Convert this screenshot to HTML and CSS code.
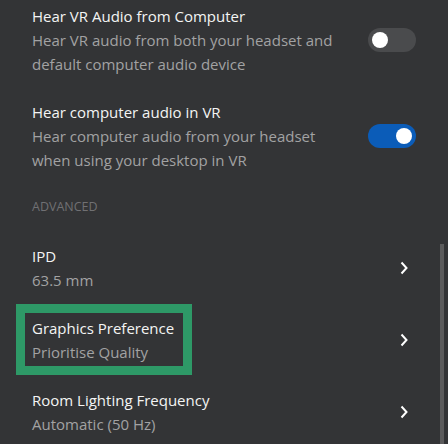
FILE: index.html
```html
<!DOCTYPE html>
<html>
<head>
<meta charset="utf-8">
<link rel="stylesheet" href="styles.css">
</head>
<body>
<div class="page">
  <div class="row">
    <div class="text">
      <div class="title">Hear VR Audio from Computer</div>
      <div class="desc">Hear VR audio from both your headset and default computer audio device</div>
    </div>
    <div class="toggle"><span class="knob"></span></div>
  </div>
  <div class="row">
    <div class="text">
      <div class="title">Hear computer audio in VR</div>
      <div class="desc">Hear computer audio from your headset when using your desktop in VR</div>
    </div>
    <div class="toggle on"><span class="knob"></span></div>
  </div>
  <div class="section">ADVANCED</div>
  <div class="row link">
    <div class="text">
      <div class="title">IPD</div>
      <div class="desc">63.5 mm</div>
    </div>
    <svg class="chev" width="24" height="24" viewBox="0 0 24 24"><polyline points="9.5,6.5 14.5,12 9.5,17.5" fill="none" stroke="#fff" stroke-width="2"/></svg>
  </div>
  <div class="row link">
    <div class="text focus">
      <div class="title">Graphics Preference</div>
      <div class="desc">Prioritise Quality</div>
    </div>
    <svg class="chev" width="24" height="24" viewBox="0 0 24 24"><polyline points="9.5,6.5 14.5,12 9.5,17.5" fill="none" stroke="#fff" stroke-width="2"/></svg>
  </div>
  <div class="row link">
    <div class="text">
      <div class="title">Room Lighting Frequency</div>
      <div class="desc">Automatic (50 Hz)</div>
    </div>
    <svg class="chev" width="24" height="24" viewBox="0 0 24 24"><polyline points="9.5,6.5 14.5,12 9.5,17.5" fill="none" stroke="#fff" stroke-width="2"/></svg>
  </div>
</div>
<div class="scrollbar"></div>
</body>
</html>
```
FILE: styles.css
```css
html, body {
  margin: 0;
  padding: 0;
  background: #333436;
  height: 100%;
  overflow: hidden;
}
body {
  font-family: "Open Sans", "Noto Sans", sans-serif;
  font-size: 15px;
  line-height: 24px;
  position: relative;
}
.page {
  padding: 4px 32px 0 32px;
  display: flex;
  flex-direction: column;
  gap: 24px;
}
.row {
  display: flex;
  align-items: center;
  justify-content: space-between;
}
.text {
  display: flex;
  flex-direction: column;
}
.row:not(.link) .text {
  width: 314px;
}
.title {
  color: #f4f4f4;
}
.desc {
  color: #a2a2a3;
}
.section {
  color: #707073;
  font-size: 12.5px;
  line-height: 16px;
  margin: 3px 0 5px 0;
}
.toggle {
  width: 48px;
  height: 24px;
  border-radius: 12px;
  background: #4a4b4d;
  display: flex;
  align-items: center;
  padding: 0 4px;
  box-sizing: border-box;
}
.toggle.on {
  background: #0b5cb8;
  justify-content: flex-end;
}
.knob {
  width: 16px;
  height: 16px;
  border-radius: 50%;
  background: #fff;
}
.focus {
  outline: 9px solid #2e9967;
  padding: 3px 9px 2px 7px;
  margin: -3px -9px -2px -7px;
}
.scrollbar {
  position: absolute;
  left: 440px;
  top: 244px;
  width: 4px;
  bottom: 0;
  background: #5b5b5c;
}
```
